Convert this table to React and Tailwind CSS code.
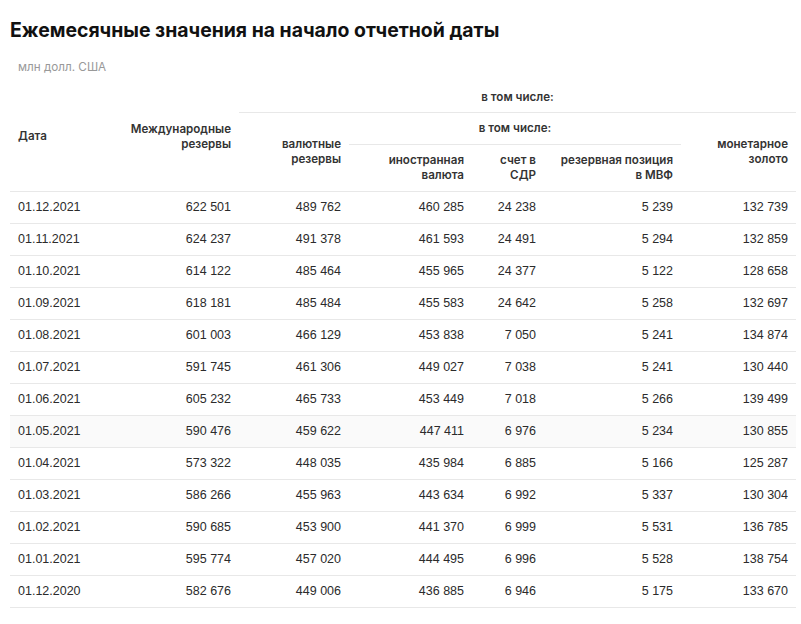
import React from "react";

const rows = [
  ["01.12.2021", "622 501", "489 762", "460 285", "24 238", "5 239", "132 739"],
  ["01.11.2021", "624 237", "491 378", "461 593", "24 491", "5 294", "132 859"],
  ["01.10.2021", "614 122", "485 464", "455 965", "24 377", "5 122", "128 658"],
  ["01.09.2021", "618 181", "485 484", "455 583", "24 642", "5 258", "132 697"],
  ["01.08.2021", "601 003", "466 129", "453 838", "7 050", "5 241", "134 874"],
  ["01.07.2021", "591 745", "461 306", "449 027", "7 038", "5 241", "130 440"],
  ["01.06.2021", "605 232", "465 733", "453 449", "7 018", "5 266", "139 499"],
  ["01.05.2021", "590 476", "459 622", "447 411", "6 976", "5 234", "130 855"],
  ["01.04.2021", "573 322", "448 035", "435 984", "6 885", "5 166", "125 287"],
  ["01.03.2021", "586 266", "455 963", "443 634", "6 992", "5 337", "130 304"],
  ["01.02.2021", "590 685", "453 900", "441 370", "6 999", "5 531", "136 785"],
  ["01.01.2021", "595 774", "457 020", "444 495", "6 996", "5 528", "138 754"],
  ["01.12.2020", "582 676", "449 006", "436 885", "6 946", "5 175", "133 670"],
];

const head = "px-2 font-semibold text-[11.6px] leading-[15px] text-[#333] align-middle";

export default function App() {
  return (
    <div className="bg-white min-h-[624px] pl-[10px] pr-[5px] pt-[18px] font-['Inter',sans-serif]">
      <h1 className="text-[19.4px] leading-[24px] font-bold text-[#111]">
        Ежемесячные значения на начало отчетной даты
      </h1>
      <p className="mt-[18px] ml-2 text-[11.7px] leading-[14px] text-[#999]">млн долл. США</p>

      <table className="mt-[9px] w-[786px] table-fixed border-collapse">
        <colgroup>
          <col className="w-[108px]" />
          <col className="w-[121px]" />
          <col className="w-[110px]" />
          <col className="w-[123px]" />
          <col className="w-[72px]" />
          <col className="w-[137px]" />
          <col className="w-[115px]" />
        </colgroup>
        <thead>
          <tr className="h-[29px]">
            <th rowSpan={3} className={`${head} text-left border-b border-[#e8e8e8]`}>
              Дата
            </th>
            <th rowSpan={3} className={`${head} text-right border-b border-[#e8e8e8]`}>
              Международные
              <br />
              резервы
            </th>
            <th colSpan={5} className={`${head} text-center border-b border-[#e8e8e8]`}>
              в том числе:
            </th>
          </tr>
          <tr className="h-[32px]">
            <th rowSpan={2} className={`${head} text-right border-b border-[#e8e8e8]`}>
              валютные
              <br />
              резервы
            </th>
            <th colSpan={3} className={`${head} text-center border-b border-[#e8e8e8]`}>
              в том числе:
            </th>
            <th rowSpan={2} className={`${head} text-right border-b border-[#e8e8e8]`}>
              монетарное
              <br />
              золото
            </th>
          </tr>
          <tr className="h-[47px]">
            <th className={`${head} text-right border-b border-[#e8e8e8]`}>
              иностранная
              <br />
              валюта
            </th>
            <th className={`${head} text-right border-b border-[#e8e8e8]`}>
              счет в
              <br />
              СДР
            </th>
            <th className={`${head} text-right border-b border-[#e8e8e8]`}>
              резервная позиция
              <br />в МВФ
            </th>
          </tr>
        </thead>
        <tbody className="font-['Liberation_Sans',sans-serif] text-[12.5px] text-[#2b2b2b]">
          {rows.map((r) => (
            <tr
              key={r[0]}
              className={`h-[32px] border-b border-[#e8e8e8] ${r[0] === "01.05.2021" ? "bg-[#fafafa]" : ""}`}
            >
              {r.map((v, i) => (
                <td key={i} className={`px-2 ${i === 0 ? "text-left" : "text-right"}`}>
                  {v}
                </td>
              ))}
            </tr>
          ))}
        </tbody>
      </table>
    </div>
  );
}
